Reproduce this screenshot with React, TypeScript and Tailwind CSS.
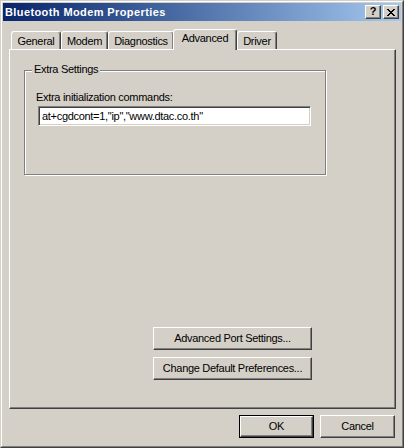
import React from 'react';

const font = { fontFamily: '"Liberation Sans", Arial, sans-serif' };

// raised 3D edge used by buttons and caption buttons
const raised =
  'border border-t-white border-l-white border-r-[#404040] border-b-[#404040] shadow-[inset_-1px_-1px_0_#808080]';

function Tab({ label, width, active }: { label: string; width: string; active?: boolean }) {
  if (active) {
    return (
      <div
        className={`relative z-10 -ml-px -mb-px h-[21px] ${width} bg-[#d4d0c8] border-l border-t border-r border-l-white border-t-white border-r-[#404040] rounded-t-[3px] shadow-[inset_-1px_0_0_#808080] flex items-start justify-center pt-[2px]`}
      >
        <span className="leading-[13px]">{label}</span>
      </div>
    );
  }
  return (
    <div
      className={`h-[18px] ${width} border-l border-t border-r border-l-white border-t-white border-r-[#404040] rounded-t-[3px] shadow-[inset_-1px_0_0_#808080] flex items-center justify-center pt-px`}
    >
      <span className="leading-[13px]">{label}</span>
    </div>
  );
}

function Button({ children, className = '' }: { children: React.ReactNode; className?: string }) {
  return (
    <div className={`h-[23px] ${raised} flex items-center justify-center ${className}`}>
      {children}
    </div>
  );
}

export default function App() {
  return (
    <div className="w-[404px] h-[448px] bg-[#d4d0c8] text-[11px] tracking-[-0.3px] text-black select-none" style={font}>
      <div className="h-full border border-t-[#d4d0c8] border-l-[#d4d0c8] border-r-[#404040] border-b-[#404040]">
        <div className="h-full border border-t-white border-l-white border-r-[#808080] border-b-[#808080] p-px flex flex-col">
          {/* title bar */}
          <div className="h-[18px] bg-gradient-to-r from-[#0a246a] to-[#a6caf0] flex items-center pl-[2px] pr-[2px]">
            <span className="text-white font-bold text-[11px] tracking-[0.4px] leading-[14px] flex-1">Bluetooth Modem Properties</span>
            <div className={`w-[16px] h-[14px] bg-[#d4d0c8] ${raised} flex items-center justify-center`}>
              <span className="font-bold text-[11px] leading-[11px] tracking-normal mt-[-1px]">?</span>
            </div>
            <div className={`ml-[2px] w-[16px] h-[14px] bg-[#d4d0c8] ${raised} flex items-center justify-center`}>
              <svg width="8" height="7" viewBox="0 0 8 7" shapeRendering="crispEdges">
                <path d="M0 0h2v1h-2zM6 0h2v1h-2zM1 1h2v1h-2zM5 1h2v1h-2zM2 2h4v1h-4zM3 3h2v1h-2zM2 4h4v1h-4zM1 5h2v1h-2zM5 5h2v1h-2zM0 6h2v1h-2zM6 6h2v1h-2z" fill="#000" />
              </svg>
            </div>
          </div>

          {/* tabs */}
          <div className="ml-[6px] mt-[8px]">
            <div className="h-[20px] flex items-end pl-[2px]">
              <Tab label="General" width="w-[50px]" />
              <Tab label="Modem" width="w-[47px]" />
              <Tab label="Diagnostics" width="w-[66px]" />
              <Tab label="Advanced" width="w-[64px]" active />
              <Tab label="Driver" width="w-[40px]" />
            </div>

            {/* tab page */}
            <div className="w-[387px] h-[360px] border border-t-white border-l-white border-r-[#404040] border-b-[#404040] shadow-[inset_-1px_-1px_0_#808080]">
              <div className="relative ml-[14px] mt-[20px] w-[302px] h-[105px] border border-[#808080] shadow-[inset_1px_1px_0_#fff,1px_1px_0_#fff]">
                <span className="absolute left-[7px] top-[-8px] px-[2px] bg-[#d4d0c8] leading-[13px]">Extra Settings</span>
                <div className="pt-[20px] pl-[11px]">
                  <div className="leading-[13px]">Extra initialization commands:</div>
                  <div className="mt-[2px] ml-[2px] w-[273px] h-[20px] bg-white border border-t-[#808080] border-l-[#808080] border-r-white border-b-white shadow-[inset_1px_1px_0_#404040,inset_-1px_-1px_0_#d4d0c8] flex items-center pl-[3px]">
                    <span className="leading-[13px]">at+cgdcont=1,"ip","www.dtac.co.th"</span>
                  </div>
                </div>
              </div>

              <div className="ml-[143px] mt-[152px] flex flex-col gap-[7px]">
                <Button className="w-[159px]">Advanced Port Settings...</Button>
                <Button className="w-[159px]">Change Default Preferences...</Button>
              </div>
            </div>
          </div>

          {/* dialog buttons */}
          <div className="mt-[6px] flex">
            <div className="ml-[236px] w-[75px] h-[23px] border border-black">
              <div className={`h-full ${raised} flex items-center justify-center`}>OK</div>
            </div>
            <Button className="ml-[6px] w-[75px]">Cancel</Button>
          </div>
        </div>
      </div>
    </div>
  );
}
